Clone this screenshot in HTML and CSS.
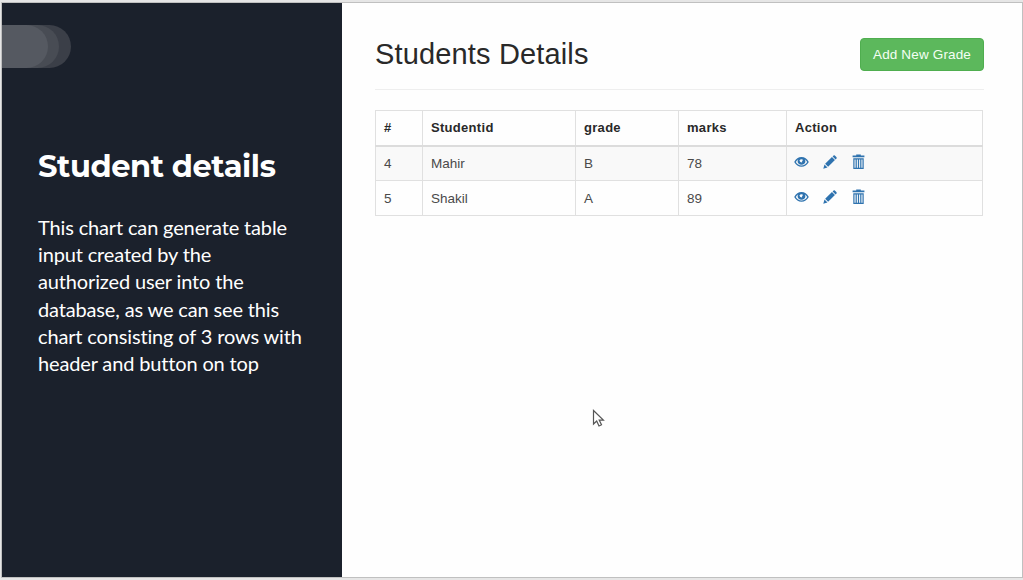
FILE: index.html
```html
<!DOCTYPE html>
<html lang="en">
<head>
<meta charset="utf-8">
<title>Student details</title>
<link rel="stylesheet" href="styles.css">
</head>
<body>
<svg class="defs" width="0" height="0" aria-hidden="true">
  <symbol id="eye" viewBox="0 0 15 12"><path fill-rule="evenodd" d="M.2 6C2 2.600 4.400 1 7.500 1s5.500 1.600 7.300 5c-1.800 3.200-4.200 4.800-7.300 4.800S2 9.200.2 6zm1.600 0c1.300 2.300 3.200 3.500 5.700 3.500s4.400-1.200 5.700-3.500c-.7-1.300-1.500-2.200-2.500-2.800.5.600.7 1.300.7 2.100 0 2.100-1.700 3.400-3.900 3.400S3.600 7.400 3.600 5.300c0-.8.200-1.500.7-2.100C3.300 3.800 2.500 4.700 1.800 6zm3.700-1.800c.3 1.600 1 2.200 2.600 2.300-.2-1.200.1-1.800 1-2.600-.7-.9-2.700-.9-3.600.3z"/></symbol>
  <symbol id="pencil" viewBox="0 0 15 15"><path d="M.3 14.700l1.300-4.500 3.200 3.200zM2.300 9.500l7.300-7.300 3.200 3.200-7.300 7.300zM10.300 1.500l1-1q.7-.5 1.400 0l1.800 1.800q.5.700 0 1.400l-1 1z"/></symbol>
  <symbol id="trash" viewBox="0 0 13 15"><path d="M4.200 1.600V.4h4.600v1.200h3.600v1.700H.6V1.600z"/><path fill-rule="evenodd" d="M1.300 4.300h10.400V15H1.300zM2.500 5.600v8.200h1.100V5.600zm2.300 0v8.200h1.100V5.600zm2.300 0v8.200h1.100V5.600zm2.300 0v8.200h1.100V5.600z"/></symbol>
</svg>
<main class="slide">
  <aside class="panel">
    <div class="pills"><i class="pill pill-long"></i><i class="pill pill-mid"></i><i class="pill pill-short"></i></div>
    <h1 class="panel-title">Student details</h1>
    <p class="panel-text">This chart can generate table<br>input created by the<br>authorized user into the<br>database, as we can see this<br>chart consisting of 3 rows with<br>header and button on top</p>
  </aside>
  <section class="content">
    <header class="page-header">
      <h2 class="page-title">Students Details</h2>
      <button class="add">Add New Grade</button>
    </header>
    <table class="grades">
      <colgroup><col class="c1"><col class="c2"><col class="c3"><col class="c4"><col></colgroup>
      <thead><tr><th>#</th><th>Studentid</th><th>grade</th><th>marks</th><th>Action</th></tr></thead>
      <tbody>
        <tr class="striped"><td>4</td><td>Mahir</td><td>B</td><td>78</td><td><div class="actions"><svg class="eye"><use href="#eye"/></svg><svg class="pencil"><use href="#pencil"/></svg><svg class="trash"><use href="#trash"/></svg></div></td></tr>
        <tr><td>5</td><td>Shakil</td><td>A</td><td>89</td><td><div class="actions"><svg class="eye"><use href="#eye"/></svg><svg class="pencil"><use href="#pencil"/></svg><svg class="trash"><use href="#trash"/></svg></div></td></tr>
      </tbody>
    </table>
  </section>
</main>
<svg class="cursor" viewBox="0 0 13 19"><path d="M1.500 1.500v13.500l3.200-3 2.300 5 2.500-1.200-2.300-4.700h4.200z"/></svg>
</body>
</html>
```

FILE: styles.css
```css
* { box-sizing: border-box; }
body { margin: 0; height: 580px; padding: 2px 0 2px 1px; background: #e6e6e6; overflow: hidden; }
.defs { position: absolute; }
.slide { display: flex; height: 576px; border: 1px solid #c0c0c0; background: #fefefe; }
.panel { width: 340px; background: #1b212c; color: #fff; padding-top: 22px; }
.pills { display: grid; height: 43px; }
.pill { grid-area: 1 / 1; height: 43px; border-radius: 0 22px 22px 0; }
.pill-long { width: 69px; background: #3b3f48; }
.pill-mid { width: 57px; background: #484c54; }
.pill-short { width: 46px; background: #555961; }
.panel-title { margin: 78px 0 0 36px; font: 700 30.500px/40px Montserrat, Inter, sans-serif; letter-spacing: -0.4px; white-space: nowrap; }
.panel-text { margin: 28px 0 0 36px; font: 20px/27.2px Lato, sans-serif; letter-spacing: -0.15px; white-space: nowrap; }
.content { flex: 1; padding: 35px 38px 0 33px; font-family: "Liberation Sans", Arial, sans-serif; }
.page-header { display: flex; justify-content: space-between; height: 52px; border-bottom: 1px solid #eee; }
.page-title { margin: 0; font-size: 29px; line-height: 33px; font-weight: 400; letter-spacing: 0.15px; color: #292929; }
.add { width: 124px; height: 33px; padding: 0; border: 1px solid #4fae4f; border-radius: 4px; background: #5cb85c; color: #f4fff4; font: 13.500px "Liberation Sans", Arial, sans-serif; letter-spacing: 0.15px; }
.grades { margin-top: 20px; width: 608px; table-layout: fixed; border-collapse: collapse; font-size: 13.500px; color: #4a4a4a; }
.grades th, .grades td { height: 35px; padding: 0 8px; border: 1px solid #e0e0e0; text-align: left; }
.grades th { border-bottom: 2px solid #dcdcdc; color: #292929; font-size: 13px; letter-spacing: 0.3px; }
.c1 { width: 47px; }
.c2 { width: 153px; }
.c3 { width: 103px; }
.c4 { width: 108px; }
.striped { background: #f9f9f9; }
.actions { display: flex; align-items: center; height: 18px; fill: #2f73af; margin: -3px 0 0 -1px; }
.eye { width: 15px; height: 12px; margin-right: 14px; }
.pencil { width: 14px; height: 14px; margin-right: 15px; }
.trash { width: 13px; height: 15px; }
.cursor { position: absolute; left: 592px; top: 409px; width: 13px; height: 19px; fill: #fff; stroke: #555; stroke-width: 1.200; }
```
